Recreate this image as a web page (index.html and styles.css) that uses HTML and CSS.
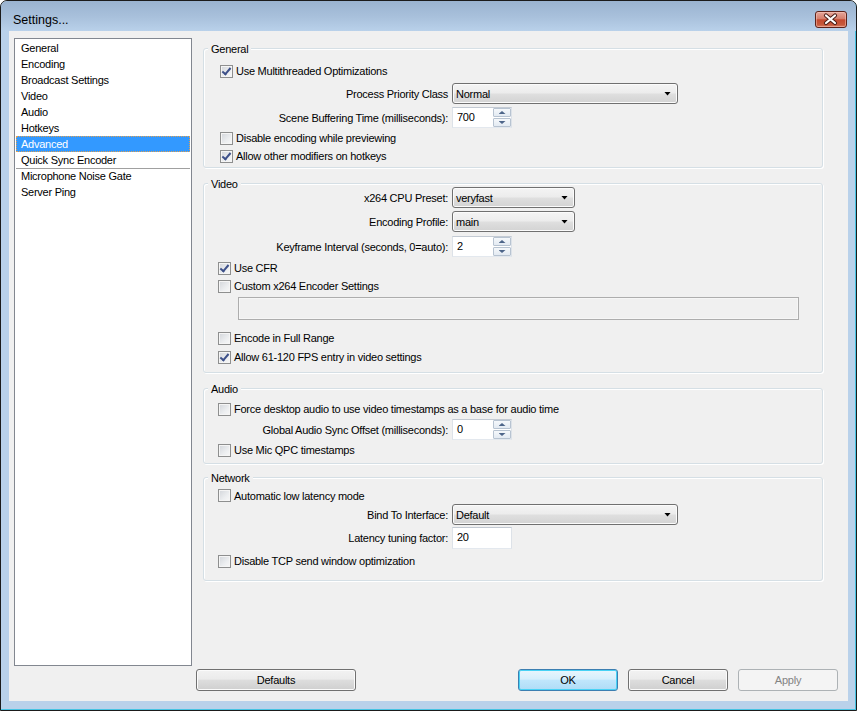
FILE: index.html
```html
<!DOCTYPE html>
<html>
<head>
<meta charset="utf-8">
<title>Settings...</title>
<link rel="stylesheet" href="styles.css">
</head>
<body>
<div class="window">
  <div class="titlebar">
    <span class="title">Settings...</span>
    <span class="close">
      <svg width="32" height="17" viewBox="0 0 32 17">
        <path d="M11 4.5 L20 12 M20 4.5 L11 12" stroke="#4a1d16" stroke-width="4.2" stroke-linecap="round" fill="none"/>
        <path d="M11 4.5 L20 12 M20 4.5 L11 12" stroke="#ffffff" stroke-width="2.2" stroke-linecap="round" fill="none"/>
      </svg>
    </span>
  </div>
  <div class="client">
    <div class="main">
      <ul class="nav">
        <li>General</li>
        <li>Encoding</li>
        <li>Broadcast Settings</li>
        <li>Video</li>
        <li>Audio</li>
        <li>Hotkeys</li>
        <li class="selected">Advanced</li>
        <li>Quick Sync Encoder</li>
        <li class="sep">Microphone Noise Gate</li>
        <li>Server Ping</li>
      </ul>
      <div class="pane">
        <section class="group g-general">
          <div class="group-title">General</div>
          <div class="check indent-wide mt13 checked"><span class="cb"></span>Use Multithreaded Optimizations</div>
          <div class="field mt3"><span class="lbl">Process Priority Class</span><span class="select wide">Normal</span></div>
          <div class="field mt3"><span class="lbl">Scene Buffering Time (milliseconds):</span><span class="spin"><span class="edit">700</span><span class="btns"><span class="sb up"></span><span class="sb down"></span></span></span></div>
          <div class="check indent-wide mt1"><span class="cb"></span>Disable encoding while previewing</div>
          <div class="check indent-wide checked"><span class="cb"></span>Allow other modifiers on hotkeys</div>
        </section>

        <section class="group g-video">
          <div class="group-title">Video</div>
          <div class="field mt3"><span class="lbl">x264 CPU Preset:</span><span class="select short">veryfast</span></div>
          <div class="field mt3"><span class="lbl">Encoding Profile:</span><span class="select short">main</span></div>
          <div class="field mt4"><span class="lbl">Keyframe Interval (seconds, 0=auto):</span><span class="spin"><span class="edit">2</span><span class="btns"><span class="sb up"></span><span class="sb down"></span></span></span></div>
          <div class="check mt2 checked"><span class="cb"></span>Use CFR</div>
          <div class="check"><span class="cb"></span>Custom x264 Encoder Settings</div>
          <div class="textbox mt2"></div>
          <div class="check mt9"><span class="cb"></span>Encode in Full Range</div>
          <div class="check mt1 checked"><span class="cb"></span>Allow 61-120 FPS entry in video settings</div>
        </section>

        <section class="group g-audio">
          <div class="group-title">Audio</div>
          <div class="check mt11"><span class="cb"></span>Force desktop audio to use video timestamps as a base for audio time</div>
          <div class="field mt1"><span class="lbl">Global Audio Sync Offset (milliseconds):</span><span class="spin"><span class="edit">0</span><span class="btns"><span class="sb up"></span><span class="sb down"></span></span></span></div>
          <div class="check mt1"><span class="cb"></span>Use Mic QPC timestamps</div>
        </section>

        <section class="group g-network">
          <div class="group-title">Network</div>
          <div class="check mt9 short-row"><span class="cb"></span>Automatic low latency mode</div>
          <div class="field"><span class="lbl">Bind To Interface:</span><span class="select wide">Default</span></div>
          <div class="field mt2"><span class="lbl">Latency tuning factor:</span><span class="editbox">20</span></div>
          <div class="check mt3"><span class="cb"></span>Disable TCP send window optimization</div>
        </section>
      </div>
    </div>
    <div class="buttons">
      <span class="btn defaults">Defaults</span>
      <span class="spacer"></span>
      <span class="btn default-btn">OK</span>
      <span class="btn">Cancel</span>
      <span class="btn disabled">Apply</span>
    </div>
  </div>
</div>
</body>
</html>
```

FILE: styles.css
```css
* { box-sizing: border-box; }

body {
  margin: 0;
  background: #ffffff;
  font-family: "Liberation Sans", Arial, sans-serif;
  font-size: 11px;
  letter-spacing: -0.25px;
  color: #000;
}

.window {
  width: 857px;
  height: 711px;
  border: 1px solid #1b1b1b;
  border-radius: 7px 7px 0 0;
  background: #b9d1ea;
  box-shadow: inset -1px -1px 0 #46c3e2;
  display: flex;
  flex-direction: column;
  overflow: hidden;
}

.titlebar {
  height: 30px;
  flex: none;
  display: flex;
  align-items: flex-start;
  padding: 0 9px 0 12px;
  background: linear-gradient(#9ab3d0, #a9c1dc 55%, #b9d1ea);
  border-radius: 6px 6px 0 0;
}

.title {
  margin-top: 12px;
  font-size: 12.5px;
  line-height: 15px;
  letter-spacing: 0;
}

.close {
  margin-left: auto;
  margin-top: 10px;
  width: 32px;
  height: 17px;
  border: 1px solid #5e2219;
  border-radius: 3px;
  background: linear-gradient(#e5a79b, #d57e6c 45%, #c4492f 52%, #c75a3c 85%, #d9816a);
  box-shadow: inset 0 0 0 1px rgba(255, 210, 200, 0.45);
  display: flex;
  align-items: center;
  justify-content: center;
}
.close svg { display: block; margin: -1px; }

.client {
  flex: 1;
  margin: 0 8px 9px 8px;
  background: #f0f0f0;
  display: flex;
  flex-direction: column;
  padding: 7px 10px 0 5px;
}

.main {
  display: flex;
  align-items: flex-start;
  height: 628px;
  flex: none;
}

.nav {
  width: 178px;
  height: 628px;
  margin: 0;
  padding: 1px;
  list-style: none;
  background: #fff;
  border: 1px solid #828790;
}

.nav li {
  height: 16px;
  line-height: 16px;
  padding-left: 5px;
  white-space: nowrap;
}

.nav li.selected {
  background: #3399ff;
  color: #fff;
  outline: 1px dotted #e0a050;
  outline-offset: -1px;
}

.nav li.sep {
  border-top: 1px solid #a0a0a0;
  line-height: 15px;
}

.pane {
  margin-left: 11px;
  width: 620px;
}

.group {
  border: 1px solid #d5dfe5;
  border-radius: 3px;
  box-shadow: inset 1px 1px 0 #fff, 1px 1px 0 #fff;
}

.group-title {
  width: max-content;
  height: 13px;
  line-height: 13px;
  margin: -6px 0 -7px 4px;
  padding: 0 3px;
  background: #f0f0f0;
}

.g-general { margin-top: 10px; height: 120px; }
.g-video { margin-top: 15px; height: 190px; }
.g-audio { margin-top: 15px; height: 76px; }
.g-network { margin-top: 13px; height: 104px; }

.mt1 { margin-top: 1px; }
.mt2 { margin-top: 2px; }
.mt3 { margin-top: 3px; }
.mt4 { margin-top: 4px; }
.mt9 { margin-top: 9px; }
.mt11 { margin-top: 11px; }
.mt13 { margin-top: 13px; }

/* checkboxes */
.check {
  display: flex;
  align-items: center;
  height: 18px;
  margin-left: 14px;
  white-space: nowrap;
}
.check.indent-wide { margin-left: 16px; }
.check.short-row { height: 17px; }

.cb {
  flex: none;
  width: 13px;
  height: 13px;
  margin-right: 3px;
  border: 1px solid #8e8f8f;
  background: linear-gradient(135deg, #d2d5da, #eceef0 60%, #f8f8f8);
  box-shadow: inset 0 0 0 1px #f5f5f5;
  position: relative;
}

.checked .cb::after {
  content: "";
  position: absolute;
  left: 3px;
  top: 0px;
  width: 3px;
  height: 7px;
  border-right: 2px solid #3d5089;
  border-bottom: 2px solid #3d5089;
  transform: rotate(40deg);
}

/* form rows */
.field {
  display: flex;
  align-items: center;
}

.lbl {
  width: 244px;
  margin-right: 4px;
  text-align: right;
  white-space: nowrap;
}

.select {
  height: 21px;
  border: 1px solid #707070;
  border-radius: 3px;
  background: linear-gradient(#f4f4f4, #ececec 48%, #dfdfdf 52%, #d3d3d3);
  box-shadow: inset 0 0 0 1px #fbfbfb;
  display: flex;
  align-items: center;
  justify-content: space-between;
  padding: 0 6px 0 3px;
}
.select.wide { width: 226px; }
.select.short { width: 123px; }
.select::after {
  content: "";
  width: 7px;
  height: 4px;
  background: #000;
  clip-path: polygon(0 0, 100% 0, 50% 100%);
}

.spin {
  display: flex;
  width: 60px;
  height: 21px;
  border: 1px solid;
  border-color: #c3cad3 #dde2e8 #e3e8ee #dde2e8;
  background: #fff;
}
.spin .edit {
  flex: 1;
  padding-left: 4px;
  line-height: 18px;
}
.btns {
  width: 18px;
  display: flex;
  flex-direction: column;
  gap: 1px;
}
.sb {
  flex: 1;
  border: 1px solid #b7c3d1;
  border-radius: 1px;
  background: linear-gradient(#f5f8fb, #e3eaf2);
  display: flex;
  align-items: center;
  justify-content: center;
}
.sb::after {
  content: "";
  width: 7px;
  height: 3px;
  background: #4d6589;
}
.sb.up::after { clip-path: polygon(50% 0, 100% 100%, 0 100%); }
.sb.down::after { clip-path: polygon(0 0, 100% 0, 50% 100%); }

.editbox {
  width: 60px;
  height: 22px;
  border: 1px solid;
  border-color: #c3cad3 #dde2e8 #e3e8ee #dde2e8;
  background: #fff;
  padding-left: 4px;
  line-height: 19px;
}

.textbox {
  margin-left: 34px;
  width: 561px;
  height: 23px;
  border: 1px solid #adadad;
  background: #f0f0f0;
  box-shadow: inset 0 0 0 1px #f6f6f6;
}

/* buttons */
.buttons {
  display: flex;
  margin-top: 3px;
  padding-left: 182px;
}
.spacer { flex: 1; }

.btn {
  width: 100px;
  height: 22px;
  margin-left: 10px;
  border: 1px solid #707070;
  border-radius: 3px;
  background: linear-gradient(#f2f2f2, #ebebeb 45%, #dddddd 52%, #cfcfcf);
  box-shadow: inset 0 0 0 1px #fbfbfb;
  text-align: center;
  line-height: 20px;
}
.btn.defaults { width: 160px; margin-left: 0; }
.btn.default-btn {
  border-color: #3c7fb1;
  background: linear-gradient(#e9f6fd, #d6effc 45%, #bfe6fc 52%, #aedcf6);
  box-shadow: inset 0 0 0 1px #48d2f5;
}
.btn.disabled {
  border-color: #adb2b5;
  background: #f4f4f4;
  box-shadow: none;
  color: #838383;
}
```
